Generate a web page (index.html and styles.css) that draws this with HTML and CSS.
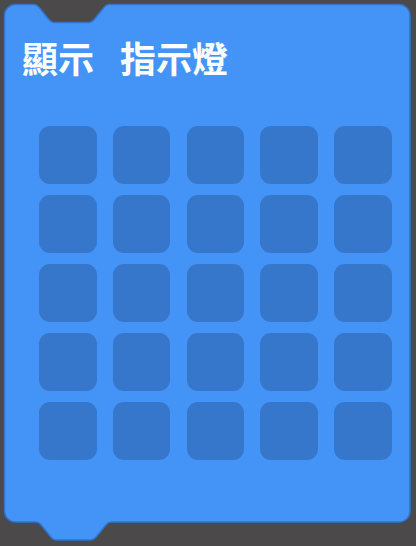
FILE: index.html
```html
<!DOCTYPE html>
<html lang="zh-Hant">
<head>
<meta charset="utf-8">
<title>顯示 指示燈</title>
<link rel="stylesheet" href="styles.css">
</head>
<body>
<div class="workspace">
  <div class="block">
    <svg class="block-shape" width="407" height="540" viewBox="0 0 407 540" aria-hidden="true">
      <path d="M 0.5 11.5 a 11 11 0 0 1 11 -11 H 30 c 3 0 3.3 1 6 4 l 8 10 c 2.7 3 3 4 6 4 h 35 c 3 0 3.3 -1 6 -4 l 8 -10 c 2.7 -3 3 -4 6 -4 H 395 a 11 11 0 0 1 11 11 V 507 a 11 11 0 0 1 -11 11 H 107 c -3 0 -3.3 1 -6 4 l -8 10 c -2.7 3 -3 4 -6 4 h -35 c -3 0 -3.3 -1 -6 -4 l -8 -10 c -2.7 -3 -3 -4 -6 -4 H 11.5 a 11 11 0 0 1 -11 -11 Z"/>
    </svg>
    <div class="header">
      <span class="label">顯示</span>
      <span class="label">指示燈</span>
    </div>
    <div class="leds">
      <div class="led"></div><div class="led"></div><div class="led"></div><div class="led"></div><div class="led"></div>
      <div class="led"></div><div class="led"></div><div class="led"></div><div class="led"></div><div class="led"></div>
      <div class="led"></div><div class="led"></div><div class="led"></div><div class="led"></div><div class="led"></div>
      <div class="led"></div><div class="led"></div><div class="led"></div><div class="led"></div><div class="led"></div>
      <div class="led"></div><div class="led"></div><div class="led"></div><div class="led"></div><div class="led"></div>
    </div>
  </div>
</div>
</body>
</html>
```
FILE: styles.css
```css
html, body {
  margin: 0;
  padding: 0;
  background: #4b4949;
}

body {
  width: 416px;
  height: 546px;
  overflow: hidden;
  font-family: "Noto Sans CJK TC", "Noto Sans", sans-serif;
}

.workspace {
  padding: 4px 0 0 4px;
}

.block {
  position: relative;
  width: 406px;
  height: 518px;
}

.block-shape {
  position: absolute;
  left: 0;
  top: 0;
  overflow: visible;
}

.block-shape path {
  fill: #4394f6;
  stroke: #3174cc;
  stroke-width: 1.5;
}

.header {
  position: relative;
  display: flex;
  gap: 26px;
  padding: 33px 0 0 18px;
  height: 40px;
  line-height: 40px;
  font-size: 36px;
  font-weight: 700;
  color: #ffffff;
}

.leds {
  position: relative;
  display: grid;
  grid-template-columns: repeat(5, 57.5px);
  grid-auto-rows: 57.5px;
  column-gap: 16.25px;
  row-gap: 11.5px;
  margin: 49px 0 0 35px;
}

.led {
  background: #3677cb;
  border-radius: 11px;
}
```
